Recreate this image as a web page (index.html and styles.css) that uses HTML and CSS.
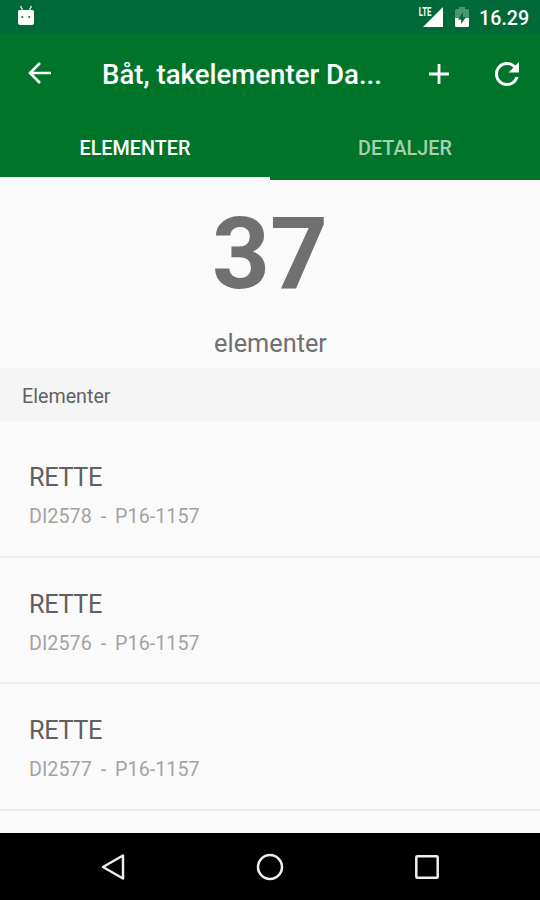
FILE: index.html
```html
<!DOCTYPE html>
<html lang="nb">
<head>
<meta charset="utf-8">
<title>Båt, takelementer</title>
<link rel="stylesheet" href="styles.css">
</head>
<body>
<div class="screen">
  <div class="status">
    <svg class="robot" width="20" height="22" viewBox="0 0 20 22"><path d="M4.500 1 6.500 5M15.500 1 13.500 5" stroke="#e8f5e9" stroke-width="1.300"/><path d="M2 6.500Q2 5 3.500 5H16.500Q18 5 18 6.500V17.500Q18 20 15.500 20H4.500Q2 20 2 17.500Z" fill="#fff"/><circle cx="6.300" cy="12" r="1" fill="#00693a"/><circle cx="13.300" cy="12" r="1" fill="#00693a"/></svg>
    <span class="lte">LTE</span>
    <svg class="signal" width="20" height="20" viewBox="0 0 20 20"><path d="M20 0V20H0Z" fill="#fff"/></svg>
    <svg class="battery" width="14" height="20" viewBox="0 0 14 20"><path d="M0 3.500Q0 2 1.500 2H4V0H10V2H12.500Q14 2 14 3.500V11H0Z" fill="#4d9673"/><path d="M8 5 3 12.500H6.200V17L11 10H8Z" fill="#00693a"/><path d="M0 11H4L3 12.500H6.200V17L10.300 11H14V18.500Q14 20 12.500 20H1.500Q0 20 0 18.500Z" fill="#fff"/></svg>
    <span class="clock">16.29</span>
  </div>
  <header class="toolbar">
    <svg class="back" width="24" height="22" viewBox="0 0 24 22"><path d="M23 11H2M12 1 2 11 12 21" fill="none" stroke="#fff" stroke-width="2.600"/></svg>
    <h1>Båt, takelementer Da...</h1>
    <svg class="add" width="20" height="20" viewBox="0 0 20 20"><path d="M10 0V20M0 10H20" stroke="#fff" stroke-width="2.800"/></svg>
    <svg class="refresh" width="24" height="24" viewBox="4 4 16 16"><path d="M17.650 6.350A8 8 0 1 0 19.730 14H17.650A6 6 0 1 1 12 6c1.660 0 3.140.690 4.220 1.780L13 11h7V4z" fill="#fff"/></svg>
  </header>
  <nav class="tabs">
    <div class="tab active"><span>ELEMENTER</span></div>
    <div class="tab"><span>DETALJER</span></div>
  </nav>
  <section class="summary">
    <div class="count">37</div>
    <div class="unit">elementer</div>
  </section>
  <h2>Elementer</h2>
  <main class="list">
    <article class="item"><div class="name">RETTE</div><div class="code">DI2578&nbsp; -&nbsp; P16-1157</div></article>
    <article class="item"><div class="name">RETTE</div><div class="code">DI2576&nbsp; -&nbsp; P16-1157</div></article>
    <article class="item"><div class="name">RETTE</div><div class="code">DI2577&nbsp; -&nbsp; P16-1157</div></article>
  </main>
  <footer class="navbar">
    <svg width="28" height="30" viewBox="0 0 28 30"><path d="M24 3.500V26.500L4 15Z" fill="none" stroke="#eee" stroke-width="2.500" stroke-linejoin="round"/></svg>
    <svg width="28" height="30" viewBox="0 0 28 30"><circle cx="14" cy="15" r="12" fill="none" stroke="#eee" stroke-width="2.500"/></svg>
    <svg width="28" height="30" viewBox="0 0 28 30"><rect x="3.300" y="4.300" width="21.400" height="21.400" rx="1" fill="none" stroke="#eee" stroke-width="2.500"/></svg>
  </footer>
</div>
</body>
</html>
```
FILE: styles.css
```css
* { box-sizing: border-box; }
body { margin: 0; font-family: Roboto, "Liberation Sans", sans-serif; }
svg { display: block; flex: none; }
.screen { width: 540px; height: 900px; display: flex; flex-direction: column; overflow: hidden; background: #fafafa; }
.status { height: 34px; flex: none; display: flex; align-items: flex-start; background: #00693a; color: #fff; }
.robot { margin: 5px 0 0 16px; }
.lte { margin: 6px -8px 0 auto; font-size: 12px; line-height: 13px; font-weight: 700; transform: scaleX(.65); transform-origin: right; }
.signal { margin: 7px 0 0; }
.battery { margin: 7px 0 0 12px; }
.clock { width: 51px; margin: 7px 10px 0 10px; font-size: 19.700px; line-height: 24px; font-weight: 500; }
.toolbar { height: 81px; flex: none; display: flex; align-items: center; background: #007529; color: #fff; }
.back { margin: -4px 0 0 28px; }
h1 { width: 282px; margin: 1px 0 0 50px; font-size: 27.600px; line-height: 36px; font-weight: 500; white-space: nowrap; }
.add { margin: -1px 0 0 45px; }
.refresh { margin: -1px 0 0 46px; }
.tabs { height: 65px; flex: none; display: flex; background: #007529; }
.tab { flex: 1; text-align: center; padding-top: 21px; border-bottom: 3px solid transparent; font-size: 19.800px; line-height: 26px; font-weight: 500; color: #a6d0b1; }
.active { color: #fff; border-color: #fafafa; }
.summary { height: 188px; flex: none; text-align: center; color: #707070; }
.count { height: 145px; font-size: 101px; line-height: 147px; font-weight: 700; }
.unit { padding-left: 1px; font-size: 25.300px; line-height: 38px; }
h2 { height: 53px; flex: none; margin: 0; padding-left: 22px; background: #f5f5f5; color: #626262; font-size: 19.700px; line-height: 58px; font-weight: 400; }
.list { flex: 1; }
.item { height: 126.500px; padding: 31px 29px 0; border-bottom: 2px solid #ededed; }
.item:first-child { height: 136.500px; padding-top: 41px; }
.name { font-size: 25.300px; line-height: 32px; letter-spacing: -.4px; color: #606060; }
.code { font-size: 19.700px; line-height: 24px; margin-top: 11px; word-spacing: -.5px; letter-spacing: .05px; color: #a3a3a3; }
.navbar { height: 67px; flex: none; display: flex; justify-content: space-between; align-items: center; padding: 0 99px; background: #000; }
```
